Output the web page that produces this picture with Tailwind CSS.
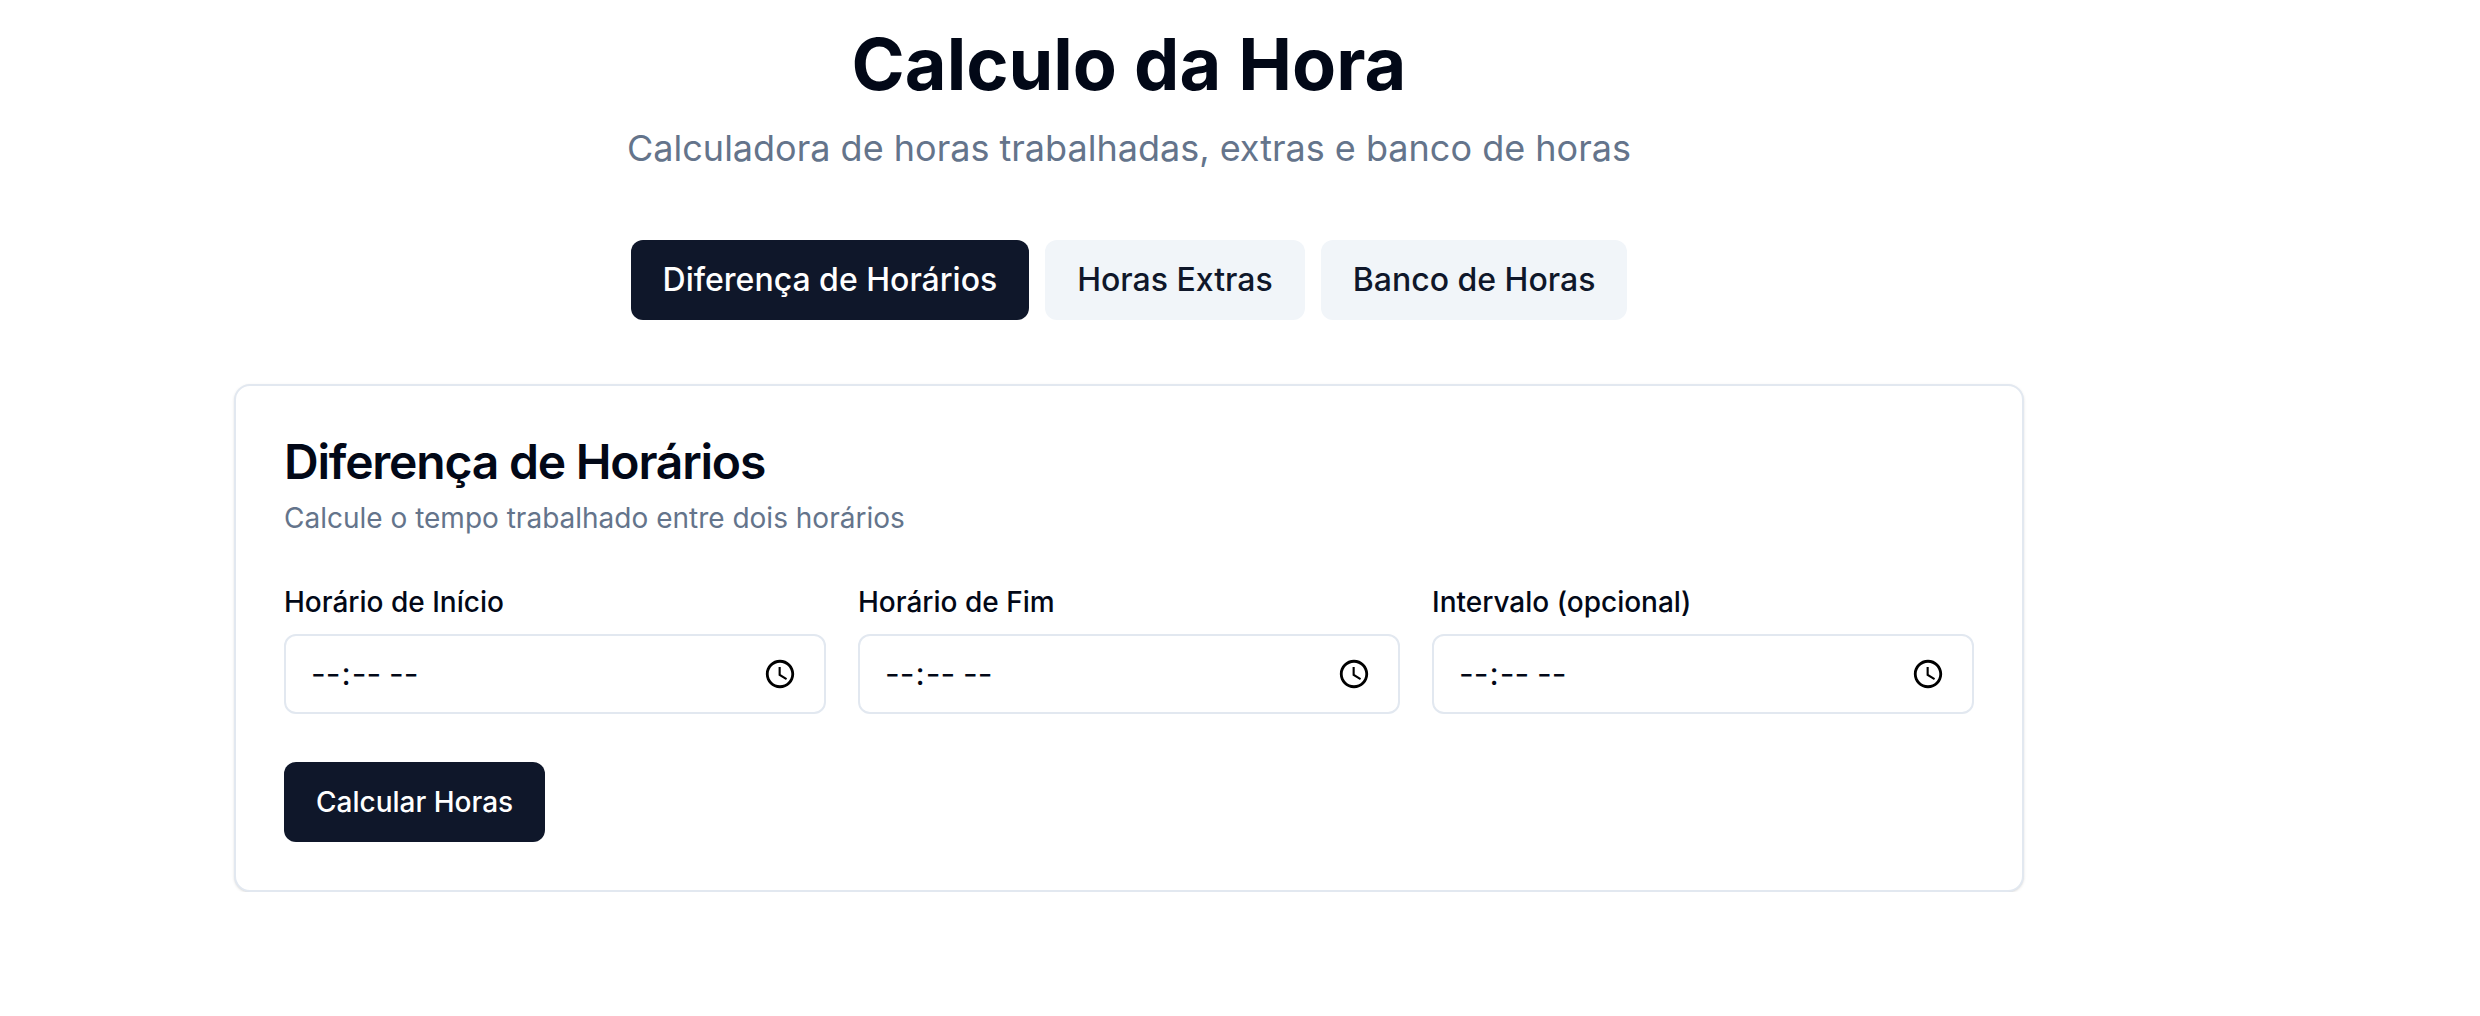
<!DOCTYPE html>
<html lang="pt-BR">
  <head>
    <meta charset="UTF-8" />
    <title>Calculo da Hora</title>
    <script src="https://cdn.jsdelivr.net/npm/@tailwindcss/browser@4"></script>
  </head>
  <body class="bg-white text-[#020817] font-['Inter',sans-serif]">
    <main class="w-[1790px] ml-[234px]">
      <header class="text-center pt-6">
        <h1 class="text-[72px] leading-[80px] font-bold text-[#020817]">Calculo da Hora</h1>
        <p class="mt-4 text-[36px] leading-[56px] text-[#64748b]">Calculadora de horas trabalhadas, extras e banco de horas</p>
      </header>

      <nav class="flex justify-center gap-4 mt-16">
        <button class="h-20 px-8 rounded-xl bg-[#0f172a] text-white text-[32px] font-medium">Diferença de Horários</button>
        <button class="h-20 px-8 rounded-xl bg-[#f1f5f9] text-[#0f172a] text-[32px] font-medium">Horas Extras</button>
        <button class="h-20 px-8 rounded-xl bg-[#f1f5f9] text-[#0f172a] text-[32px] font-medium">Banco de Horas</button>
      </nav>

      <section class="mt-16 p-12 border-2 border-[#e2e8f0] rounded-2xl shadow-sm bg-white">
        <h2 class="text-[48px] leading-[56px] font-semibold tracking-tight">Diferença de Horários</h2>
        <p class="mt-2 text-[28px] leading-10 text-[#64748b]">Calcule o tempo trabalhado entre dois horários</p>

        <div class="grid grid-cols-3 gap-8 mt-12">
          <div>
            <label class="block text-[28px] leading-8 font-medium">Horário de Início</label>
            <input type="time" class="block mt-4 w-full h-20 px-6 text-[32px] border-2 border-[#e2e8f0] rounded-xl" />
          </div>
          <div>
            <label class="block text-[28px] leading-8 font-medium">Horário de Fim</label>
            <input type="time" class="block mt-4 w-full h-20 px-6 text-[32px] border-2 border-[#e2e8f0] rounded-xl" />
          </div>
          <div>
            <label class="block text-[28px] leading-8 font-medium">Intervalo (opcional)</label>
            <input type="time" class="block mt-4 w-full h-20 px-6 text-[32px] border-2 border-[#e2e8f0] rounded-xl" />
          </div>
        </div>

        <button class="mt-12 h-20 px-8 rounded-xl bg-[#0f172a] text-white text-[28px] font-medium">Calcular Horas</button>
      </section>
    </main>
  </body>
</html>
